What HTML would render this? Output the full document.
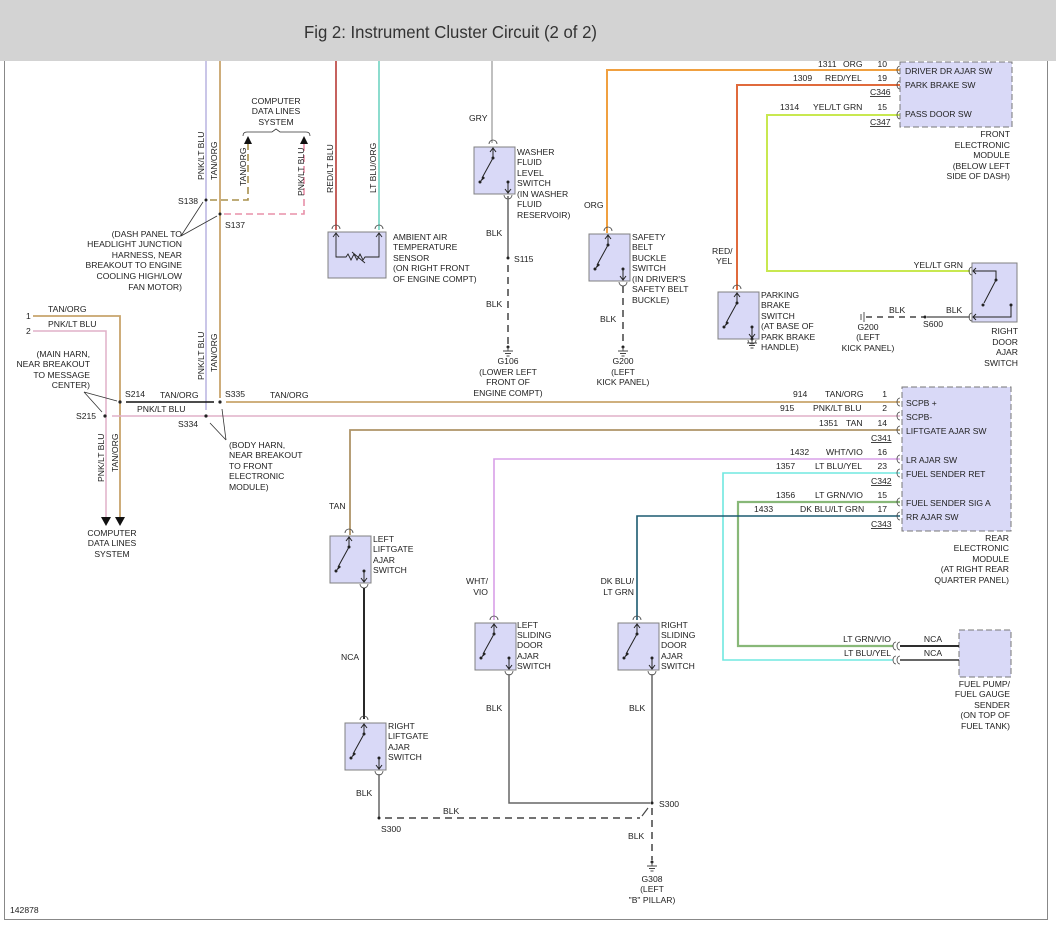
<!DOCTYPE html>
<html><head><meta charset="utf-8"><style>
html,body{margin:0;padding:0;background:#fff;}
svg{display:block;}
text{font-family:"Liberation Sans",Arial,sans-serif;font-size:8.6px;fill:#222;}
.r{text-anchor:end}.m{text-anchor:middle}
</style></head><body>
<svg width="1056" height="934" viewBox="0 0 1056 934" xmlns="http://www.w3.org/2000/svg">
<defs>
<g id="sw">
<rect x="0" y="0" width="41" height="47" fill="#d9d9f7" stroke="#808080" stroke-width="1"/>
<path d="M15,-3 a4,4 0 0 1 8,0" fill="none" stroke="#444" stroke-width="0.8"/>
<path d="M30,48 a4,4 0 0 0 8,0" fill="none" stroke="#444" stroke-width="0.8"/>
<path d="M19,2 L19,11 L8,31 M34,35 L34,46 M16,5 L19,1 L22,5 M31,42 L34,46 L37,42" fill="none" stroke="#222" stroke-width="1"/>
<path d="M6,35 L9,29 L11,31 Z" fill="#222"/>
<circle cx="19" cy="11" r="1.5" fill="#222"/><circle cx="6" cy="35" r="1.5" fill="#222"/><circle cx="34" cy="35" r="1.5" fill="#222"/>
</g>
<g id="gnd"><circle cx="0" cy="0" r="1.5" fill="#222"/><path d="M0,0 V4 M-5,4 H5 M-3,6.5 H3 M-1.5,9 H1.5" stroke="#444" stroke-width="0.9"/></g>
</defs>
<rect x="0" y="0" width="1056" height="61" fill="#d3d3d3"/>
<text x="304" y="38" style="font-size:17.5px;fill:#333" textLength="293" lengthAdjust="spacingAndGlyphs">Fig 2: Instrument Cluster Circuit (2 of 2)</text>
<path d="M4.5,61 V919.5 H1047.5 V61" fill="none" stroke="#888" stroke-width="1"/>

<!-- left vertical wires -->
<line x1="206" y1="61" x2="206" y2="410" stroke="#b8b4e0" stroke-width="1.5"/>
<line x1="220" y1="61" x2="220" y2="398" stroke="#c8a46c" stroke-width="1.8"/>
<line x1="336" y1="61" x2="336" y2="230" stroke="#c0504d" stroke-width="1.8"/>
<line x1="379" y1="61" x2="379" y2="230" stroke="#80d8c8" stroke-width="1.8"/>
<line x1="492" y1="61" x2="492" y2="143" stroke="#aaa" stroke-width="1.5"/>
<text transform="translate(204,180) rotate(-90)">PNK/LT BLU</text>
<text transform="translate(217,180) rotate(-90)">TAN/ORG</text>
<text transform="translate(204,380) rotate(-90)">PNK/LT BLU</text>
<text transform="translate(217,372) rotate(-90)">TAN/ORG</text>
<text transform="translate(333,193) rotate(-90)">RED/LT BLU</text>
<text transform="translate(376,193) rotate(-90)">LT BLU/ORG</text>
<text x="469" y="121">GRY</text>

<!-- computer data lines top -->
<text x="276" y="104" class="m">COMPUTER</text><text x="276" y="114" class="m">DATA LINES</text><text x="276" y="125" class="m">SYSTEM</text>
<path d="M243,136 q0,-4 4,-4 H272 l4,-3 l4,3 H306 q4,0 4,4" fill="none" stroke="#333" stroke-width="0.8"/>
<path d="M244,144 L248,136 L252,144Z M300,144 L304,136 L308,144Z" fill="#111"/>
<path d="M210,200 H248 V144" fill="none" stroke="#a8904c" stroke-width="1.6" stroke-dasharray="7,4"/>
<path d="M224,214 H304 V144" fill="none" stroke="#e890a8" stroke-width="1.6" stroke-dasharray="7,4"/>
<text transform="translate(246,186) rotate(-90)">TAN/ORG</text>
<text transform="translate(304,196) rotate(-90)">PNK/LT BLU</text>
<circle cx="206" cy="200" r="1.5" fill="#222"/><circle cx="220" cy="214" r="1.5" fill="#222"/>
<text x="178" y="204">S138</text><text x="225" y="228">S137</text>
<path d="M181,236 L203,202 M181,236 L217,216" stroke="#333" stroke-width="0.8"/>
<text x="182" y="237" class="r">(DASH PANEL TO</text><text x="182" y="247" class="r">HEADLIGHT JUNCTION</text><text x="182" y="258" class="r">HARNESS, NEAR</text><text x="182" y="268" class="r">BREAKOUT TO ENGINE</text><text x="182" y="279" class="r">COOLING HIGH/LOW</text><text x="182" y="290" class="r">FAN MOTOR)</text>

<!-- left inputs -->
<path d="M33,316 H120 V518" fill="none" stroke="#c8a46c" stroke-width="1.8"/>
<path d="M33,331 H106 V518" fill="none" stroke="#e0b0c8" stroke-width="1.5"/>
<text x="26" y="319">1</text><text x="26" y="334">2</text>
<text x="48" y="312">TAN/ORG</text><text x="48" y="327">PNK/LT BLU</text>
<path d="M101,517 L106,526 L111,517Z M115,517 L120,526 L125,517Z" fill="#111"/>
<text x="112" y="536" class="m">COMPUTER</text><text x="112" y="546" class="m">DATA LINES</text><text x="112" y="557" class="m">SYSTEM</text>
<text transform="translate(104,482) rotate(-90)">PNK/LT BLU</text>
<text transform="translate(118,472) rotate(-90)">TAN/ORG</text>
<text x="90" y="357" class="r">(MAIN HARN,</text><text x="90" y="367" class="r">NEAR BREAKOUT</text><text x="90" y="378" class="r">TO MESSAGE</text><text x="90" y="388" class="r">CENTER)</text>
<path d="M84,392 L117,401 M84,392 L102,412" stroke="#333" stroke-width="0.8"/>

<!-- main bus -->
<line x1="126" y1="402" x2="214" y2="402" stroke="#111" stroke-width="1.5"/>
<line x1="226" y1="402" x2="900" y2="402" stroke="#c8a46c" stroke-width="1.8"/>
<line x1="112" y1="416" x2="900" y2="416" stroke="#e0b0c8" stroke-width="1.5"/>
<circle cx="120" cy="402" r="1.6" fill="#222"/><circle cx="105" cy="416" r="1.6" fill="#222"/>
<circle cx="206" cy="416" r="1.6" fill="#222"/><circle cx="220" cy="402" r="1.6" fill="#222"/>
<text x="125" y="397">S214</text><text x="76" y="419">S215</text><text x="225" y="397">S335</text><text x="178" y="427">S334</text>
<text x="160" y="398">TAN/ORG</text><text x="137" y="412">PNK/LT BLU</text><text x="270" y="398">TAN/ORG</text>
<path d="M226,440 L210,423 M226,440 L222,409" stroke="#333" stroke-width="0.8"/>
<text x="229" y="448">(BODY HARN,</text><text x="229" y="458">NEAR BREAKOUT</text><text x="229" y="469">TO FRONT</text><text x="229" y="479">ELECTRONIC</text><text x="229" y="490">MODULE)</text>

<!-- ambient sensor -->
<rect x="328" y="232" width="58" height="46" fill="#d9d9f7" stroke="#808080"/>
<path d="M332,229 a4,4 0 0 1 8,0 M375,229 a4,4 0 0 1 8,0" fill="none" stroke="#444" stroke-width="0.8"/>
<path d="M336,233 V257 H346 l2,-3 l3,6 l3,-6 l3,6 l3,-6 l3,6 l2,-3 H379 V233 M333,237 L336,233 L339,237 M376,237 L379,233 L382,237 M352,252 L365,263" fill="none" stroke="#222" stroke-width="0.9"/>
<text x="393" y="240">AMBIENT AIR</text><text x="393" y="250">TEMPERATURE</text><text x="393" y="261">SENSOR</text><text x="393" y="271">(ON RIGHT FRONT</text><text x="393" y="282">OF ENGINE COMPT)</text>

<!-- washer -->
<use href="#sw" x="474" y="147"/>
<text x="517" y="155">WASHER</text><text x="517" y="165">FLUID</text><text x="517" y="176">LEVEL</text><text x="517" y="186">SWITCH</text><text x="517" y="197">(IN WASHER</text><text x="517" y="207">FLUID</text><text x="517" y="218">RESERVOIR)</text>
<line x1="508" y1="196" x2="508" y2="258" stroke="#666" stroke-width="1.5"/>
<line x1="508" y1="265" x2="508" y2="345" stroke="#444" stroke-width="1.5" stroke-dasharray="7,5"/>
<circle cx="508" cy="258" r="1.5" fill="#222"/><text x="514" y="262">S115</text>
<text x="486" y="236">BLK</text><text x="486" y="307">BLK</text>
<use href="#gnd" x="508" y="347"/>
<text x="508" y="364" class="m">G106</text><text x="508" y="375" class="m">(LOWER LEFT</text><text x="508" y="385" class="m">FRONT OF</text><text x="508" y="396" class="m">ENGINE COMPT)</text>

<!-- safety belt -->
<path d="M607,233 V70 H900" fill="none" stroke="#f0a040" stroke-width="2"/>
<text x="584" y="208">ORG</text>
<use href="#sw" x="589" y="234"/>
<text x="632" y="240">SAFETY</text><text x="632" y="250">BELT</text><text x="632" y="261">BUCKLE</text><text x="632" y="271">SWITCH</text><text x="632" y="282">(IN DRIVER'S</text><text x="632" y="292">SAFETY BELT</text><text x="632" y="303">BUCKLE)</text>
<line x1="623" y1="286" x2="623" y2="345" stroke="#444" stroke-width="1.5" stroke-dasharray="7,5"/>
<text x="600" y="322">BLK</text>
<use href="#gnd" x="623" y="347"/>
<text x="623" y="364" class="m">G200</text><text x="623" y="375" class="m">(LEFT</text><text x="623" y="385" class="m">KICK PANEL)</text>

<!-- parking brake -->
<path d="M737,290 V85 H900" fill="none" stroke="#e06a3c" stroke-width="2"/>
<text x="712" y="254">RED/</text><text x="716" y="264">YEL</text>
<use href="#sw" x="718" y="292"/>
<use href="#gnd" x="752" y="339"/>
<text x="761" y="298">PARKING</text><text x="761" y="308">BRAKE</text><text x="761" y="319">SWITCH</text><text x="761" y="329">(AT BASE OF</text><text x="761" y="340">PARK BRAKE</text><text x="761" y="350">HANDLE)</text>

<!-- yel/lt grn -->
<path d="M900,115 H767 V271 H970" fill="none" stroke="#c8e850" stroke-width="2"/>
<text x="780" y="110">1314</text><text x="813" y="110">YEL/LT GRN</text><text x="887" y="110" class="r">15</text>
<text x="818" y="67">1311</text><text x="843" y="67">ORG</text><text x="887" y="67" class="r">10</text>
<text x="793" y="81">1309</text><text x="825" y="81">RED/YEL</text><text x="887" y="81" class="r">19</text>
<text x="870" y="95" style="text-decoration:underline">C346</text><text x="870" y="125" style="text-decoration:underline">C347</text>
<text x="963" y="268" class="r">YEL/LT GRN</text>
<rect x="900" y="62" width="112" height="65" fill="#d9d9f7" stroke="#777" stroke-dasharray="6,3"/>
<path d="M900,66 a3,4 0 0 0 0,8 M900,81 a3,4 0 0 0 0,8 M900,111 a3,4 0 0 0 0,8" fill="none" stroke="#444" stroke-width="0.8"/>
<text x="905" y="74">DRIVER DR AJAR SW</text><text x="905" y="88">PARK BRAKE SW</text><text x="905" y="117">PASS DOOR SW</text>
<text x="1010" y="137" class="r">FRONT</text><text x="1010" y="148" class="r">ELECTRONIC</text><text x="1010" y="158" class="r">MODULE</text><text x="1010" y="169" class="r">(BELOW LEFT</text><text x="1010" y="179" class="r">SIDE OF DASH)</text>

<!-- right door -->
<rect x="972" y="263" width="45" height="59" fill="#d9d9f7" stroke="#808080"/>
<path d="M972,267 a3,4 0 0 0 0,8 M972,313 a3,4 0 0 0 0,8" fill="none" stroke="#444" stroke-width="0.8"/>
<path d="M973,271 H996 V280 L984,303 M1011,305 V317 H973 M976,268 L973,271 L976,274 M976,314 L973,317 L976,320" fill="none" stroke="#222" stroke-width="1"/>
<circle cx="996" cy="280" r="1.5" fill="#222"/><circle cx="983" cy="305" r="1.5" fill="#222"/><circle cx="1011" cy="305" r="1.5" fill="#222"/>
<line x1="927" y1="317" x2="970" y2="317" stroke="#666" stroke-width="1.5"/>
<line x1="866" y1="317" x2="924" y2="317" stroke="#444" stroke-width="1.5" stroke-dasharray="6,5"/>
<path d="M861,314 V320 M864,312 V322" stroke="#444" stroke-width="0.9"/>
<circle cx="925" cy="317" r="1.5" fill="#222"/>
<text x="889" y="313">BLK</text><text x="946" y="313">BLK</text><text x="923" y="327">S600</text>
<text x="868" y="330" class="m">G200</text><text x="868" y="340" class="m">(LEFT</text><text x="868" y="351" class="m">KICK PANEL)</text>
<text x="1018" y="334" class="r">RIGHT</text><text x="1018" y="345" class="r">DOOR</text><text x="1018" y="355" class="r">AJAR</text><text x="1018" y="366" class="r">SWITCH</text>

<!-- rear module wires -->
<path d="M900,430 H350 V535" fill="none" stroke="#ae9468" stroke-width="1.8"/>
<path d="M900,459 H494 V620" fill="none" stroke="#d8a0e8" stroke-width="1.6"/>
<path d="M900,473 H723 V660 H893" fill="none" stroke="#70e8e0" stroke-width="1.6"/>
<path d="M900,502 H738 V646 H893" fill="none" stroke="#88b878" stroke-width="2.2"/>
<path d="M900,516 H637 V620" fill="none" stroke="#1c5a70" stroke-width="1.6"/>
<text x="793" y="397">914</text><text x="825" y="397">TAN/ORG</text><text x="887" y="397" class="r">1</text>
<text x="780" y="411">915</text><text x="813" y="411">PNK/LT BLU</text><text x="887" y="411" class="r">2</text>
<text x="819" y="426">1351</text><text x="846" y="426">TAN</text><text x="887" y="426" class="r">14</text>
<text x="871" y="441" style="text-decoration:underline">C341</text>
<text x="790" y="455">1432</text><text x="826" y="455">WHT/VIO</text><text x="887" y="455" class="r">16</text>
<text x="776" y="469">1357</text><text x="815" y="469">LT BLU/YEL</text><text x="887" y="469" class="r">23</text>
<text x="871" y="484" style="text-decoration:underline">C342</text>
<text x="776" y="498">1356</text><text x="815" y="498">LT GRN/VIO</text><text x="887" y="498" class="r">15</text>
<text x="754" y="512">1433</text><text x="800" y="512">DK BLU/LT GRN</text><text x="887" y="512" class="r">17</text>
<text x="871" y="527" style="text-decoration:underline">C343</text>
<rect x="902" y="387" width="109" height="144" fill="#d9d9f7" stroke="#777" stroke-dasharray="6,3"/>
<path d="M900,398 a3,4 0 0 0 0,8 M900,412 a3,4 0 0 0 0,8 M900,426 a3,4 0 0 0 0,8 M900,455 a3,4 0 0 0 0,8 M900,469 a3,4 0 0 0 0,8 M900,498 a3,4 0 0 0 0,8 M900,512 a3,4 0 0 0 0,8" fill="none" stroke="#444" stroke-width="0.8"/>
<text x="906" y="406">SCPB +</text><text x="906" y="420">SCPB-</text><text x="906" y="434">LIFTGATE AJAR SW</text><text x="906" y="463">LR AJAR SW</text><text x="906" y="477">FUEL SENDER RET</text><text x="906" y="506">FUEL SENDER SIG A</text><text x="906" y="520">RR AJAR SW</text>
<text x="1009" y="541" class="r">REAR</text><text x="1009" y="551" class="r">ELECTRONIC</text><text x="1009" y="562" class="r">MODULE</text><text x="1009" y="572" class="r">(AT RIGHT REAR</text><text x="1009" y="583" class="r">QUARTER PANEL)</text>

<!-- fuel pump -->
<rect x="959" y="630" width="52" height="47" fill="#d9d9f7" stroke="#777" stroke-dasharray="6,3"/>
<path d="M900,642 a3,4 0 0 0 0,8 M896,642 a3,4 0 0 0 0,8 M900,656 a3,4 0 0 0 0,8 M896,656 a3,4 0 0 0 0,8" fill="none" stroke="#444" stroke-width="0.8"/>
<line x1="900" y1="646" x2="959" y2="646" stroke="#111" stroke-width="1.8"/>
<line x1="900" y1="660" x2="959" y2="660" stroke="#333" stroke-width="1.5"/>
<text x="891" y="642" class="r">LT GRN/VIO</text><text x="891" y="656" class="r">LT BLU/YEL</text>
<text x="933" y="642" class="m">NCA</text><text x="933" y="656" class="m">NCA</text>
<text x="1010" y="687" class="r">FUEL PUMP/</text><text x="1010" y="697" class="r">FUEL GAUGE</text><text x="1010" y="708" class="r">SENDER</text><text x="1010" y="718" class="r">(ON TOP OF</text><text x="1010" y="729" class="r">FUEL TANK)</text>

<!-- liftgate switches -->
<text x="329" y="509">TAN</text>
<use href="#sw" x="330" y="536"/>
<text x="373" y="542">LEFT</text><text x="373" y="552">LIFTGATE</text><text x="373" y="563">AJAR</text><text x="373" y="573">SWITCH</text>
<line x1="364" y1="588" x2="364" y2="719" stroke="#111" stroke-width="1.8"/>
<text x="341" y="660">NCA</text>
<use href="#sw" x="345" y="723"/>
<text x="388" y="729">RIGHT</text><text x="388" y="739">LIFTGATE</text><text x="388" y="750">AJAR</text><text x="388" y="760">SWITCH</text>
<line x1="379" y1="774" x2="379" y2="818" stroke="#666" stroke-width="1.5"/>
<text x="356" y="796">BLK</text>
<circle cx="379" cy="818" r="1.5" fill="#222"/>
<line x1="385" y1="818" x2="640" y2="818" stroke="#444" stroke-width="1.5" stroke-dasharray="7,5"/>
<path d="M642,816 L648,808" stroke="#444" stroke-width="1.2"/>
<text x="443" y="814">BLK</text><text x="381" y="832">S300</text>

<!-- sliding switches -->
<text x="488" y="584" class="r">WHT/</text><text x="488" y="595" class="r">VIO</text>
<text x="634" y="584" class="r">DK BLU/</text><text x="634" y="595" class="r">LT GRN</text>
<use href="#sw" x="475" y="623"/>
<text x="517" y="628">LEFT</text><text x="517" y="638">SLIDING</text><text x="517" y="648">DOOR</text><text x="517" y="659">AJAR</text><text x="517" y="669">SWITCH</text>
<use href="#sw" x="618" y="623"/>
<text x="661" y="628">RIGHT</text><text x="661" y="638">SLIDING</text><text x="661" y="648">DOOR</text><text x="661" y="659">AJAR</text><text x="661" y="669">SWITCH</text>
<path d="M509,674 V803 H650" fill="none" stroke="#666" stroke-width="1.5"/>
<line x1="652" y1="674" x2="652" y2="803" stroke="#666" stroke-width="1.5"/>
<text x="486" y="711">BLK</text><text x="629" y="711">BLK</text>
<circle cx="652" cy="803" r="1.5" fill="#222"/><text x="659" y="807">S300</text>
<line x1="652" y1="808" x2="652" y2="860" stroke="#444" stroke-width="1.5" stroke-dasharray="7,5"/>
<text x="628" y="839">BLK</text>
<use href="#gnd" x="652" y="862"/>
<text x="652" y="882" class="m">G308</text><text x="652" y="892" class="m">(LEFT</text><text x="652" y="903" class="m">"B" PILLAR)</text>
<text x="10" y="913">142878</text>
</svg>
</body></html>
